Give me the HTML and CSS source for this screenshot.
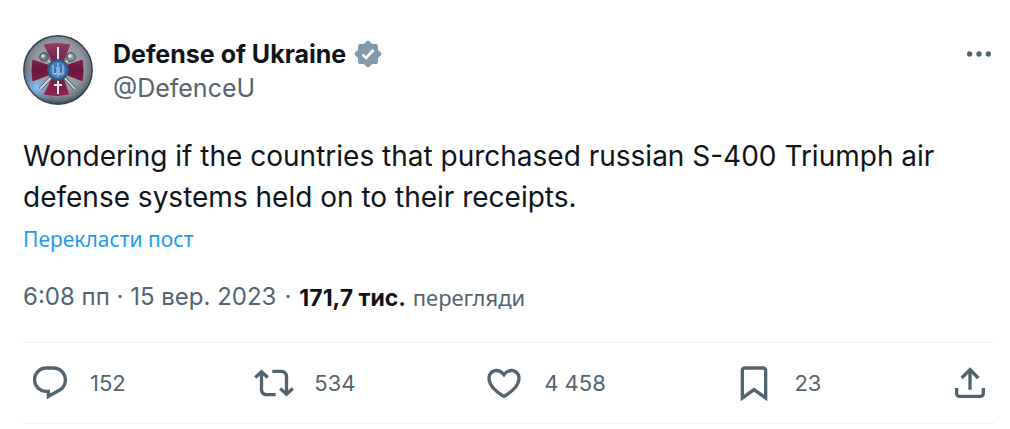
FILE: index.html
```html
<!DOCTYPE html>
<html lang="uk">
<head>
<meta charset="utf-8">
<meta name="viewport" content="width=device-width, initial-scale=1">
<title>Defense of Ukraine</title>
<link rel="stylesheet" href="styles.css">
</head>
<body>
<article class="post">
  <header class="post-header">
    <svg class="avatar" viewBox="0 0 70 70" role="img" aria-label="Defense of Ukraine">
      <defs>
        <radialGradient id="metal" cx="50%" cy="45%" r="55%">
          <stop offset="0" stop-color="#b4b9c0"/><stop offset=".7" stop-color="#8f959e"/><stop offset=".9" stop-color="#666f7a"/><stop offset="1" stop-color="#3a424d"/>
        </radialGradient>
        <radialGradient id="glow" cx="18%" cy="76%" r="30%">
          <stop offset="0" stop-color="#8cc4fb"/><stop offset="1" stop-color="#5f8fc4" stop-opacity="0"/>
        </radialGradient>
        <linearGradient id="cross" x1="0" y1="0" x2="0" y2="1">
          <stop offset="0" stop-color="#8f3f62"/><stop offset=".5" stop-color="#6d1640"/><stop offset="1" stop-color="#8a2852"/>
        </linearGradient>
        <radialGradient id="shield"><stop offset="0" stop-color="#2a67ae"/><stop offset=".7" stop-color="#4580c0"/><stop offset="1" stop-color="#24466f"/></radialGradient>
      </defs>
      <circle cx="35" cy="35" r="34.2" fill="url(#metal)" stroke="#35404c" stroke-width="1.4"/>
      <circle cx="35" cy="35" r="33.5" fill="url(#glow)"/>
      <path d="M20 9Q34 6 48 9L39.5 31 60 24Q62 36 60 47L39.5 39 47 60Q34 63 20 60L30.5 39 9 47Q7 36 9 24L30.5 31Z" fill="url(#cross)" stroke="#a59fab" stroke-width=".7"/>
      <path d="M22 22 52 54M48 22 17 54" stroke="#5d6570" stroke-width="3.6"/>
      <path d="M22 22 52 54M48 22 17 54" stroke="#d3d7dc" stroke-width="1.8"/>
      <circle cx="21" cy="22" r="4.3" fill="#737c88" stroke="#3e4650"/><circle cx="48" cy="22" r="4.3" fill="#8c949e" stroke="#3e4650"/>
      <circle cx="20" cy="21" r="1.7" fill="#dde1e6"/><circle cx="47" cy="21" r="1.7" fill="#e8ebee"/>
      <path d="M35 12V59M31 50H39" stroke="#f4eef3" stroke-width="2"/>
      <circle cx="35" cy="35" r="10.5" fill="url(#shield)" stroke="#335376"/>
      <path d="M30 30V39H40V30M35 28V42M32 39C35 37 34 34 33 32M38 39C35 37 36 34 37 32" fill="none" stroke="#bed9f0" stroke-width="1"/>
    </svg>
    <div class="author">
      <div class="name-row">
        <a class="name" href="#profile">Defense of Ukraine</a>
        <svg class="badge" viewBox="0 0 28 28" role="img" aria-label="Verified">
          <g fill="#829aab"><rect x="4" y="4" width="20" height="20" rx="2"/><rect x="4" y="4" width="20" height="20" rx="2" transform="rotate(45 14 14)"/></g>
          <path d="M8.5 14.5 12 18 19.5 10" fill="none" stroke="#fff" stroke-width="2.6"/>
        </svg>
      </div>
      <a class="handle" href="#profile">@DefenceU</a>
    </div>
    <button class="more" type="button" aria-label="Більше">
      <svg class="icon" viewBox="0 0 24 24"><path d="M3 12a2 2 0 1 1 4 0 2 2 0 0 1-4 0zm7 0a2 2 0 1 1 4 0 2 2 0 0 1-4 0zm7 0a2 2 0 1 1 4 0 2 2 0 0 1-4 0z"/></svg>
    </button>
  </header>
  <p class="body">Wondering if the countries that purchased russian S-400 Triumph air defense systems held on to their receipts.</p>
  <a class="translate" href="#translate">Перекласти пост</a>
  <div class="meta"><a class="date" href="#post">6:08 пп · 15 вер. 2023</a><span>·</span><span class="views"><strong>171,7 тис.</strong> <span class="views-label">перегляди</span></span></div>
  <div class="actions">
    <button class="action" type="button" aria-label="152 відповіді">
      <svg class="icon" viewBox="0 0 24 24"><path d="M1.751 10c0-4.42 3.584-8 8.005-8h4.366c4.49 0 8.129 3.64 8.129 8.13 0 2.96-1.607 5.68-4.196 7.11l-8.054 4.46v-3.69h-.067c-4.49.1-8.183-3.51-8.183-8.01zm8.005-6c-3.317 0-6.005 2.69-6.005 6 0 3.37 2.77 6.08 6.138 6.01l.351-.01h1.761v2.3l5.087-2.81c1.951-1.08 3.163-3.13 3.163-5.36 0-3.39-2.744-6.13-6.129-6.13H9.756z"/></svg>
      <span>152</span>
    </button>
    <button class="action" type="button" aria-label="534 поширення">
      <svg class="icon" viewBox="0 0 24 24"><path d="M4.5 3.88l4.432 4.14-1.364 1.46L5.5 7.55V16c0 1.1.896 2 2 2H13v2H7.5c-2.209 0-4-1.79-4-4V7.55L1.432 9.48.068 8.02 4.5 3.88zM16.5 6H11V4h5.5c2.209 0 4 1.79 4 4v8.45l2.068-1.93 1.364 1.46-4.432 4.14-4.432-4.14 1.364-1.46 2.068 1.93V8c0-1.1-.896-2-2-2z"/></svg>
      <span>534</span>
    </button>
    <button class="action" type="button" aria-label="4 458 вподобань">
      <svg class="icon" viewBox="0 0 24 24"><path d="M16.697 5.5c-1.222-.06-2.679.51-3.89 2.16l-.805 1.09-.806-1.09C9.984 6.01 8.526 5.44 7.304 5.5c-1.243.07-2.349.78-2.91 1.91-.552 1.12-.633 2.78.479 4.82 1.074 1.97 3.257 4.27 7.129 6.61 3.87-2.34 6.052-4.64 7.126-6.61 1.111-2.04 1.03-3.7.477-4.82-.561-1.13-1.666-1.84-2.908-1.91zm4.187 7.69c-1.351 2.48-4.001 5.12-8.379 7.67l-.503.3-.504-.3c-4.379-2.55-7.029-5.19-8.382-7.67-1.36-2.5-1.41-4.86-.514-6.67.887-1.79 2.647-2.91 4.601-3.01 1.651-.09 3.368.56 4.798 2.01 1.429-1.45 3.146-2.1 4.796-2.01 1.954.1 3.714 1.22 4.601 3.01.896 1.81.846 4.17-.514 6.67z"/></svg>
      <span>4 458</span>
    </button>
    <button class="action" type="button" aria-label="23 закладки">
      <svg class="icon" viewBox="0 0 24 24"><path d="M4 4.5C4 3.12 5.119 2 6.5 2h11C18.881 2 20 3.12 20 4.5v18.44l-8-5.71-8 5.71V4.5zM6.5 4c-.276 0-.5.22-.5.5v14.56l6-4.29 6 4.29V4.5c0-.28-.224-.5-.5-.5h-11z"/></svg>
      <span>23</span>
    </button>
    <button class="action" type="button" aria-label="Поділитися">
      <svg class="icon" viewBox="0 0 24 24"><path d="M12 2.59l5.7 5.7-1.41 1.42L13 6.41V16h-2V6.41l-3.3 3.3-1.41-1.42L12 2.59zM21 15l-.02 3.51c0 1.38-1.12 2.49-2.5 2.49H5.5C4.11 21 3 19.88 3 18.5V15h2v3.5c0 .28.22.5.5.5h12.98c.28 0 .5-.22.5-.5L19 15h2z"/></svg>
    </button>
  </div>
</article>
</body>
</html>
```
FILE: styles.css
```css
* { box-sizing: border-box; }
body {
  margin: 0;
  background: #fff;
  color: #0f1419;
  font-family: Inter, "Noto Sans", sans-serif;
}
a { color: inherit; text-decoration: none; }
button {
  padding: 0;
  border: 0;
  background: none;
  color: inherit;
  font: inherit;
  cursor: pointer;
}
svg { display: block; flex: none; }
.post { padding: 35px 15px 5px 23px; }
.post-header { display: flex; align-items: flex-start; }
.avatar { width: 70px; height: 70px; }
.author { flex: 1; padding: 2px 0 0 20px; }
.name-row { display: flex; align-items: center; gap: 8px; }
.name { font-size: 25px; line-height: 34px; font-weight: 700; }
.badge { width: 28px; height: 28px; }
.handle { display: block; color: #536471; font-size: 25px; line-height: 34px; }
.icon { width: 40px; height: 40px; fill: #536471; }
.more .icon { width: 32px; height: 38px; }
.body { margin: 31px 0 0; font-size: 28px; line-height: 41px; }
.translate {
  display: block;
  margin-top: 4px;
  color: #1d9bf0;
  font-family: "Noto Sans", sans-serif;
  font-size: 21px;
  line-height: 34px;
}
.meta {
  display: flex;
  gap: 8px;
  margin: 24px 0 27px;
  color: #536471;
  font-size: 24px;
  line-height: 34px;
}
.views strong { color: #0f1419; font-size: 23px; }
.views-label { font-family: "Noto Sans", sans-serif; font-size: 22px; }
.actions {
  display: flex;
  justify-content: space-between;
  padding: 20px 5px 20px 7px;
  border-top: 1px solid #eff3f4;
  border-bottom: 1px solid #eff3f4;
  color: #536471;
  font-size: 22px;
}
.action { display: flex; align-items: center; gap: 20px; }
```
